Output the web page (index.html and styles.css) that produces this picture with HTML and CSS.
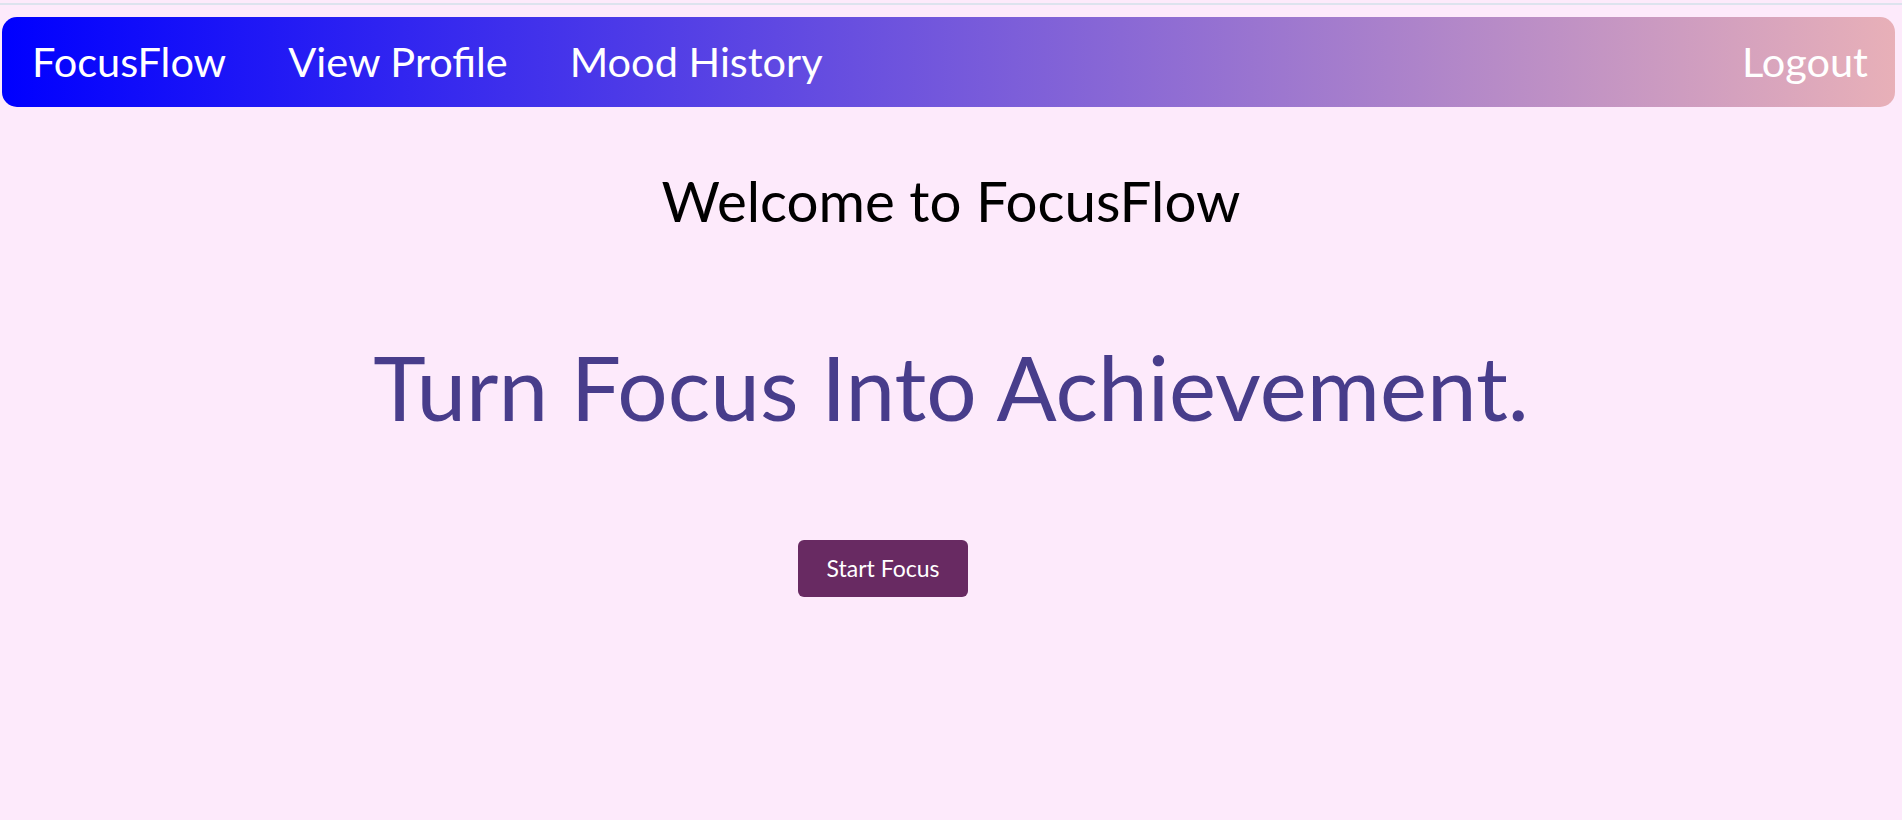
FILE: index.html
```html
<!DOCTYPE html>
<html lang="en">
<head>
<meta charset="utf-8">
<title>FocusFlow</title>
<link rel="stylesheet" href="styles.css">
</head>
<body>
<div class="topline"></div>
<nav class="navbar">
  <div class="nav-left">
    <a class="nav-link" href="#">FocusFlow</a>
    <a class="nav-link" href="#">View Profile</a>
    <a class="nav-link" href="#">Mood History</a>
  </div>
  <a class="nav-link" href="#">Logout</a>
</nav>
<main class="hero">
  <h2 class="welcome">Welcome to FocusFlow</h2>
  <h1 class="tagline">Turn Focus Into Achievement.</h1>
  <div class="actions">
    <button class="start-btn" type="button">Start Focus</button>
  </div>
</main>
</body>
</html>
```
FILE: styles.css
```css
html, body {
  margin: 0;
  padding: 0;
  background: #fdeafb;
  font-family: Lato, "Open Sans", sans-serif;
}

.topline {
  margin-top: 3px;
  height: 2px;
  background: #dde3ee;
}

.navbar {
  margin: 12px 7px 0 2px;
  height: 90px;
  border-radius: 15px;
  background: linear-gradient(90deg, #0000ff 0%, #e8b0b8 100%);
  display: flex;
  align-items: center;
  justify-content: space-between;
  padding: 0 27px 0 30px;
}

.nav-left {
  display: flex;
  align-items: center;
  gap: 62px;
}

.nav-link {
  color: #ffffff;
  text-decoration: none;
  font-size: 41.5px;
  line-height: 1;
}

.hero {
  display: flex;
  flex-direction: column;
  align-items: center;
}

.welcome {
  margin: 65px 0 0;
  font-size: 56.5px;
  line-height: 1;
  font-weight: 400;
  color: #000000;
}

.tagline {
  margin: 113px 0 0;
  font-size: 89px;
  line-height: 1;
  font-weight: 400;
  color: #483d8b;
}

.actions {
  align-self: stretch;
  padding-left: 798px;
  margin-top: 109px;
}

.start-btn {
  height: 57px;
  width: 170px;
  border: none;
  border-radius: 6px;
  background: #682a62;
  color: #ffffff;
  font-family: Lato, sans-serif;
  font-size: 23px;
  line-height: 1;
  padding: 0;
}
```
